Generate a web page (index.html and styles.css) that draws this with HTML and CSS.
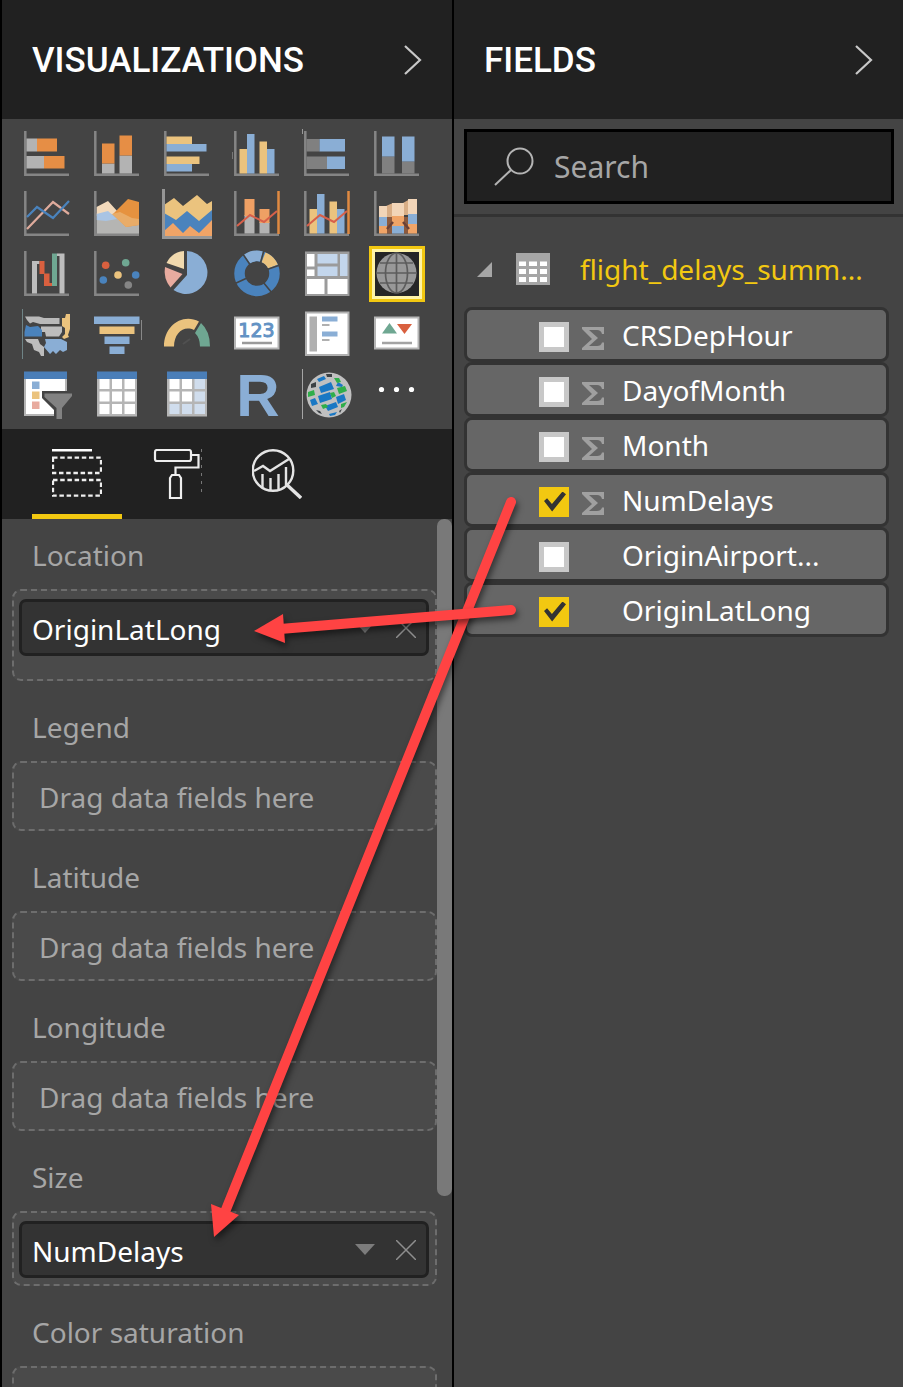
FILE: index.html
```html
<!DOCTYPE html>
<html lang="en">
<head>
<meta charset="utf-8">
<title>Report editor</title>
<link rel="stylesheet" href="styles.css">
</head>
<body>
<svg class="defs" aria-hidden="true">
  <symbol id="axes" viewBox="0 0 50 50"><path d="M3.300 2V45.700H47" fill="none" stroke="#858585" stroke-width="2.500"/></symbol>
  <symbol id="sigma" viewBox="0 0 24 24"><path fill="#a0a0a0" d="M1 1H23V8H21Q20 4 16 4H8L17 12L8 20H16Q20 20 21 16.500H23V24H1V22L11 13L1 3z"/></symbol>
  <symbol id="chevron" viewBox="0 0 18 30"><path d="M1 1L16 15L1 29" fill="none" stroke="#c8c8c8" stroke-width="2.200"/></symbol>
  <symbol id="cross" viewBox="0 0 20 20"><path d="M0 0L20 20M20 0L0 20" stroke="#8e8e8e" stroke-width="1.500"/></symbol>
  <symbol id="caret" viewBox="0 0 20 12"><path d="M0 0H20L10 11Z" fill="#7c7c7c"/></symbol>
</svg>

<main class="editor">
  <section class="panel">
    <header class="panel-head">
      <h2>VISUALIZATIONS</h2>
      <button class="collapse" aria-label="Collapse visualizations"><svg><use href="#chevron"/></svg></button>
    </header>

    <div class="gallery">
      <button aria-label="Stacked bar chart"><svg viewBox="0 0 50 50"><use href="#axes"/><path fill="#b3b3b3" d="M4.500 9.500H15V22.500H4.500zM4.500 27H22V39.500H4.500z"/><path fill="#e68e45" d="M15 9.500H35V22.500H15zM22 27H42.500V39.500H22z"/></svg></button>
      <button aria-label="Stacked column chart"><svg viewBox="0 0 50 50"><use href="#axes"/><path fill="#b3b3b3" d="M10 34.500H22.500V44.500H10zM27.500 26.500H40V44.500H27.500z"/><path fill="#e68e45" d="M10 14.500H22.500V34.500H10zM27.500 6.500H40V26.500H27.500z"/></svg></button>
      <button aria-label="Clustered bar chart"><svg viewBox="0 0 50 50"><use href="#axes"/><path fill="#ebc37e" d="M4.500 7.500H30V15H4.500zM4.500 27.500H37.500V35H4.500z"/><path fill="#8aaed5" d="M4.500 15H44.500V22.500H4.500zM4.500 35H30V42.500H4.500z"/></svg></button>
      <button aria-label="Clustered column chart"><svg viewBox="0 0 50 50"><use href="#axes"/><path fill="#ebc37e" d="M7.500 20H15V44.500H7.500zM27.500 12.500H35V44.500H27.500z"/><path fill="#8aaed5" d="M15 5H22.500V44.500H15zM35 20H42.500V44.500H35z"/><path d="M.5 23V30" stroke="#777"/></svg></button>
      <button aria-label="100% stacked bar chart"><svg viewBox="0 0 50 50"><use href="#axes"/><path fill="#808080" d="M4.500 10H17.500V22.500H4.500zM4.500 27.500H25V40H4.500z"/><path fill="#8aaed5" d="M17.500 10H43V22.500H17.500zM25 27.500H43V40H25z"/><path d="M.5 0V5" stroke="#999"/></svg></button>
      <button aria-label="100% stacked column chart"><svg viewBox="0 0 50 50"><use href="#axes"/><path fill="#808080" d="M10 27.500H22.500V44.500H10zM30 32.500H42.500V44.500H30z"/><path fill="#8aaed5" d="M10 7.500H22.500V27.500H10zM30 7.500H42.500V32.500H30z"/></svg></button>

      <button aria-label="Line chart"><svg viewBox="0 0 50 50"><use href="#axes"/><path fill="none" stroke="#dfab9c" stroke-width="2.200" d="M5 40L31 13L47 25"/><path fill="none" stroke="#4a83bd" stroke-width="2.200" d="M5 28L15 18L31 29L47 12"/></svg></button>
      <button aria-label="Area chart"><svg viewBox="0 0 50 50"><path fill="#b5b5b3" d="M4.500 24H23L36 36H47V45H4.500z"/><path fill="#f2d9bb" d="M4.500 18L16 12L26 23L30 30L20 25L4.500 27z"/><path fill="#a9c4e4" d="M4.500 25L16 22L25 30L14 32L4.500 31z"/><path fill="#e6923f" d="M21 25L36 10L47 13V36L34 38z"/><path fill="#e9ac68" d="M20 25L28 23L40 29L47 30V36L34 38z"/><use href="#axes"/></svg></button>
      <button aria-label="Stacked area chart"><svg viewBox="0 0 50 50"><path fill="#ebc37e" d="M2 16L12 9L21 17L35 6L45 15L50 12V48H2z"/><path fill="#4a83bd" d="M2 24L14 31L25 22L37 32L50 21V48H2z"/><path fill="#f0a467" d="M2 42L11 34L21 44L28 37L37 44L50 31V48H2z"/><path d="M1.500 0V48.500H50" fill="none" stroke="#969696" stroke-width="3"/></svg></button>
      <button aria-label="Line and stacked column chart"><svg viewBox="0 0 50 50"><use href="#axes"/><path fill="#b3b3b3" d="M12.500 26H22.500V44.500H12.500zM27.500 33H37.500V44.500H27.500z"/><path fill="#efa064" d="M12.500 10H22.500V27H12.500zM27.500 20H37.500V34H27.500z"/><path fill="none" stroke="#d8604a" stroke-width="2" d="M5 37L18 26L32 33L45 22"/><path d="M46.500 2V45" stroke="#e08a41" stroke-width="2.500"/></svg></button>
      <button aria-label="Line and clustered column chart"><svg viewBox="0 0 50 50"><use href="#axes"/><path fill="#ebc37e" d="M7.500 20H15V44.500H7.500zM27.500 12.500H35V44.500H27.500z"/><path fill="#8aaed5" d="M15 5H22.500V44.500H15zM35 20H42.500V44.500H35z"/><path fill="none" stroke="#d8604a" stroke-width="2" d="M5 37L18 26L32 33L45 22"/><path d="M46.500 2V45" stroke="#e08a41" stroke-width="2.500"/></svg></button>
      <button aria-label="Ribbon chart"><svg viewBox="0 0 50 50"><use href="#axes"/><path fill="#8c5a3e" d="M15 28H20V44.500H15zM32 28H37V44.500H32z"/><path fill="#d9ae86" d="M14 17L21 14V28H14zM31 14L38 10V26H31z"/><path fill="#f2d5b8" d="M7 17H15V28H7zM20 14H32V27H20zM36 10H45V25H36z"/><path fill="#8aaed5" d="M7 28H15V37H7zM20 37H32V44.500H20zM36 25H45V35H36z"/><path fill="#f0a467" d="M7 37H15V44.500H7zM20 27H32V37H20zM36 35H45V44.500H36z"/><path fill="none" stroke="#6a4138" stroke-width="2.500" d="M15 40L21 33M31 33L37 40"/></svg></button>

      <button aria-label="Waterfall chart"><svg viewBox="0 0 50 50"><use href="#axes"/><path fill="#bdbdbd" d="M10 12H17.500V15H15V44.500H10zM35 4.500H42.500V44.500H37.500V7H35z"/><path fill="#d9603f" d="M17.500 12H22.500V25H17.500zM22 24.500H27.500V34H30V37H22z"/><path fill="#6fa792" d="M30 4.500H35V37H30z"/></svg></button>
      <button aria-label="Scatter chart"><svg viewBox="0 0 50 50"><use href="#axes"/><circle cx="13.700" cy="16.300" r="3.800" fill="#d9603f"/><circle cx="33.700" cy="13.700" r="3.800" fill="#6fa792"/><circle cx="26" cy="26" r="3.800" fill="#ebc37e"/><circle cx="43.700" cy="26" r="3.800" fill="#4a83bd"/><circle cx="11.300" cy="31" r="3.800" fill="#4a83bd"/><circle cx="36.300" cy="36" r="3.800" fill="#858585"/></svg></button>
      <button aria-label="Pie chart"><svg viewBox="0 0 50 50"><path fill="#8aaed5" d="M25 2A21.500 21.500 0 1 1 11.500 41L25 26z"/><path fill="#f0d9ae" d="M22 2V20L4.500 14Q10 3 22 2z"/><path fill="#e8ab9f" d="M3 18L20.500 25L8.500 38.500Q1 29 3 18z"/></svg></button>
      <button aria-label="Donut chart"><svg viewBox="0 0 50 50"><g fill="none" stroke-width="10.500"><circle cx="25" cy="24.500" r="17.500" stroke="#4a83bd"/><path stroke="#8aaed5" d="M15 10A17.500 17.500 0 0 1 29.500 7.500"/><path stroke="#ebc37e" d="M31.500 8.300A17.500 17.500 0 0 1 41 17.500"/></g><path stroke="#444" stroke-width="1.600" d="M10.500 4.500L19 17M32 1L28.500 14M48 16L35 20.500M40 44L31 33M2 35L14 29.500"/></svg></button>
      <button aria-label="Treemap"><svg viewBox="0 0 50 50"><path fill="#9b9b9b" d="M3 2.500H47.500V47H3z"/><path fill="#fff" d="M5 5H12.500V17.500H5zM5 20.500H12.500V27H5zM5 30H22.500V45H5zM25.500 30H45.500V45H25.500z"/><path fill="#c3d6ec" d="M15.500 5H35.500V14.500H15.500zM15.500 17.500H35.500V27H15.500zM38 5H45.500V27H38z"/></svg></button>
      <button class="chosen" aria-label="Map" aria-pressed="true"><svg viewBox="0 0 50 50"><circle cx="24.500" cy="24" r="20" fill="#989898"/><g fill="none" stroke="#5c5c5c" stroke-width="1.700"><ellipse cx="24.500" cy="24" rx="11" ry="20"/><path d="M24.500 4V44M4 24H45M8 14H41M8 34H41"/></g></svg></button>

      <button aria-label="Filled map"><svg viewBox="0 0 50 50"><path d="M.5 0V50" stroke="#6f8486"/><path fill="#b9b9b9" d="M3 7.500H17L22 9H37.500V15H18L11 13L8 14.500L5 11z"/><path fill="#bdbdbd" d="M19 17.500H40V23L37 27.500H24L23 23H19z"/><path fill="#bdbdbd" d="M3 30H16L18 35L22 38V47H19L17 43L12 41L10 35L5 33z"/><path fill="#4a83bd" d="M4 16L8 18L16 17L20 21V27.500H2.500V23z"/><path fill="#8aaed5" d="M23 30H39L45 33V41L41 43L38 41L34 45L31 42L28 45L22 38L24 34z"/><path fill="#ebc37e" d="M44 5H48V20L46 26L47 28L42 30L40 28L43 25V19L40 17V9H43z"/></svg></button>
      <button aria-label="Funnel"><svg viewBox="0 0 50 50"><path fill="#8aaed5" d="M2 7.500H47.500V15H2zM12.500 27.500H37.500V35H12.500zM17.500 37.500H32.500V45H17.500z"/><path fill="#ebc37e" d="M7.500 17.500H42.500V25H7.500z"/><path d="M49.500 11V31" stroke="#888"/></svg></button>
      <button aria-label="Gauge"><svg viewBox="0 0 50 50"><path fill="#ebc37e" d="M2 37.500C2 17 20 4 37 12.500L32 21C22 16 12 24 12 37.500z"/><path fill="#6fa792" d="M39 14Q48 22 48 37.500H38Q38 29 33 24z"/><path d="M21 35L28 30" stroke="#505050" stroke-width="2"/></svg></button>
      <button aria-label="Card"><svg viewBox="0 0 50 50"><path fill="#fff" stroke="#b5b5b5" stroke-width="2" d="M3 8.500H46.500V39.500H3z"/><text class="card-digits" x="24.500" y="28" text-anchor="middle">123</text><path d="M10 34H40" stroke="#9a9a9a" stroke-width="2.500"/></svg></button>
      <button aria-label="Multi-row card"><svg viewBox="0 0 50 50"><path fill="#fff" stroke="#b0b0b0" stroke-width="2" d="M4 3.500H46.500V46H4z"/><path fill="#b0b0b0" d="M7.500 7.500H15V42.500H7.500zM20 15H27.500V17H20zM20 30H27.500V32H20z"/><path fill="#8aaed5" d="M20 7.500H35.500V12.500H20zM20 22.500H35.500V27.500H20z"/></svg></button>
      <button aria-label="KPI"><svg viewBox="0 0 50 50"><path fill="#fff" stroke="#b5b5b5" stroke-width="2" d="M3 8.500H46.500V39.500H3z"/><path fill="#6fa792" d="M10 24.500L17.500 14L25 24.500z"/><path fill="#d9603f" d="M25 15H40L32.500 25z"/><path d="M10 34H40" stroke="#a3a3a3" stroke-width="2.500"/></svg></button>

      <button aria-label="Slicer"><svg viewBox="0 0 50 50"><path fill="#fff" stroke="#b5b5b5" stroke-width="2" d="M3 8H44V46H3z"/><path fill="#4a7eb8" d="M2 2.500H45V10H2z"/><path fill="#8aaed5" d="M10 12.500H17.500V20H10z"/><path fill="#ebc37e" d="M10 22.500H17.500V30H10z"/><path fill="#e8ab9f" d="M10 32.500H17.500V40H10z"/><path fill="#444" d="M20 22H50V50H32V41L20 29z"/><path fill="#828282" d="M22.500 24.500H50V27L40 39V50H34.500V39L22.500 28z"/></svg></button>
      <button aria-label="Table"><svg viewBox="0 0 50 50"><path fill="#b5b5b5" d="M5 8H45V47.500H5z"/><path fill="#4a7eb8" d="M5 2.500H45V10H5z"/><path fill="#fff" d="M7.500 10H17.500V20H7.500zM20 10H30V20H20zM32.500 10H43V20H32.500zM7.500 22.500H17.500V32.500H7.500zM20 22.500H30V32.500H20zM32.500 22.500H43V32.500H32.500zM7.500 35H17.500V45H7.500zM20 35H30V45H20zM32.500 35H43V45H32.500z"/></svg></button>
      <button aria-label="Matrix"><svg viewBox="0 0 50 50"><path fill="#b5b5b5" d="M5 8H45V47.500H5z"/><path fill="#4a7eb8" d="M5 2.500H45V10H5z"/><path fill="#fff" d="M7.500 10H17.500V20H7.500zM20 10H30V20H20zM7.500 22.500H17.500V32.500H7.500zM20 22.500H30V32.500H20z"/><path fill="#d0dded" d="M32.500 10H43V20H32.500zM32.500 22.500H43V32.500H32.500zM7.500 35H17.500V45H7.500zM20 35H30V45H20zM32.500 35H43V45H32.500z"/></svg></button>
      <button aria-label="R script visual"><svg viewBox="0 0 50 50"><text class="r-mark" x="26" y="47" text-anchor="middle">R</text></svg></button>
      <button aria-label="ArcGIS map"><svg viewBox="0 0 50 50"><path d="M.5 0V50" stroke="#a5a5a5"/><circle cx="27" cy="26" r="22.500" fill="#c0c0c0"/><g fill="#1a78c4"><path d="M15 10L22 7L24 10L17 13zM17 18L29 13L32 20L19 24zM16 27L28 23L30 30L18 34zM23 37L34 33L36 38L26 42zM8 31L13 29L16 35L10 37zM36 13L41 16L40 18L34 17zM34 28L42 25L44 31L36 35zM27 45L35 43L33 46L28 47z"/></g><g fill="#2fae4a"><path d="M32 9L37 9L39 13L35 14zM6 23L12 21L13 26L6 28zM35 19L43 17L45 22L37 25zM19 36L24 35L26 38L21 40zM39 35L45 33L42 38L39 39zM28 24L32 23L34 27L30 29z"/></g><path fill="#3c4145" d="M24 5L30 5L30 8L25 8zM9 15L14 13L14 18L9 19zM14 41L18 42L20 45L17 44zM37 42L40 40L38 44z"/></svg></button>
      <button aria-label="More visuals"><svg viewBox="0 0 50 50"><g fill="#fff"><circle cx="9.500" cy="20.500" r="2.600"/><circle cx="24.500" cy="20.500" r="2.600"/><circle cx="39.500" cy="20.500" r="2.600"/></g></svg></button>
    </div>

    <div class="tabs" role="tablist">
      <button role="tab" aria-selected="true" aria-label="Fields"><svg viewBox="0 0 50 50"><path d="M0 1.300H40" stroke="#fff" stroke-width="2.600"/><path d="M1 8.700H49V24H1zM1 31H49V46.700H1z" fill="none" stroke="#eee" stroke-width="2.300" stroke-dasharray="4.500 2.700"/></svg></button>
      <button role="tab" aria-selected="false" aria-label="Format"><svg viewBox="0 0 50 50"><g fill="none" stroke="#eee" stroke-width="2.200"><rect x="3" y="1" width="36" height="11" rx="2"/><path d="M39 6H46.500V18.500H23.500V26"/><path d="M20 26H27L29 29V49H18V29z"/></g><path d="M49.500 0V48" stroke="#777" stroke-dasharray="3 5"/></svg></button>
      <button role="tab" aria-selected="false" aria-label="Analytics"><svg viewBox="0 0 50 50"><g fill="none" stroke="#e4e4e4" stroke-width="2.400"><circle cx="21" cy="21.500" r="20.300"/><path d="M2 22L11 17L18 22L37 10M10.500 25V38M18.500 29V41M26.500 25V40M34 18V36"/><path d="M34 35L49 49" stroke-width="3.400"/></g></svg></button>
    </div>

    <div class="wells">
      <h3>Location</h3>
      <div class="well roomy">
        <div class="chip"><span>OriginLatLong</span><button aria-label="OriginLatLong options"><svg class="caret"><use href="#caret"/></svg></button><button aria-label="Remove OriginLatLong"><svg class="cross"><use href="#cross"/></svg></button></div>
      </div>
      <h3>Legend</h3>
      <div class="well"><p>Drag data fields here</p></div>
      <h3>Latitude</h3>
      <div class="well"><p>Drag data fields here</p></div>
      <h3>Longitude</h3>
      <div class="well"><p>Drag data fields here</p></div>
      <h3>Size</h3>
      <div class="well">
        <div class="chip"><span>NumDelays</span><button aria-label="NumDelays options"><svg class="caret"><use href="#caret"/></svg></button><button aria-label="Remove NumDelays"><svg class="cross"><use href="#cross"/></svg></button></div>
      </div>
      <h3>Color saturation</h3>
      <div class="well"><p></p></div>
      <div class="thumb"></div>
    </div>
  </section>

  <section class="panel">
    <header class="panel-head">
      <h2>FIELDS</h2>
      <button class="collapse" aria-label="Collapse fields"><svg><use href="#chevron"/></svg></button>
    </header>
    <div class="search-area">
      <label class="search">
        <svg viewBox="0 0 40 40"><g fill="none" stroke="#b4b4b4" stroke-width="2"><circle cx="26" cy="14" r="12.500"/><path d="M17 23L1 38"/></g></svg>
        <input type="search" placeholder="Search" aria-label="Search">
      </label>
    </div>
    <div class="field-tree">
      <button class="table-row" aria-expanded="true">
        <svg class="expander" viewBox="0 0 15 15"><path d="M15 0V15H0z" fill="#a6a6a6"/></svg>
        <svg class="table-icon" viewBox="0 0 34 32"><path fill="#a6a6a6" d="M0 0H34V32H0z"/><path fill="#fff" d="M3 8.500H10V13H3zM13 8.500H21V13H13zM24 8.500H31V13H24zM3 16H10V21H3zM13 16H21V21H13zM24 16H31V21H24zM3 24H10V29H3zM13 24H21V29H13zM24 24H31V29H24z"/></svg>
        <span>flight_delays_summ...</span>
      </button>
      <label class="field"><input type="checkbox"><svg><use href="#sigma"/></svg><span>CRSDepHour</span></label>
      <label class="field"><input type="checkbox"><svg><use href="#sigma"/></svg><span>DayofMonth</span></label>
      <label class="field"><input type="checkbox"><svg><use href="#sigma"/></svg><span>Month</span></label>
      <label class="field"><input type="checkbox" checked><svg><use href="#sigma"/></svg><span>NumDelays</span></label>
      <label class="field"><input type="checkbox"><svg></svg><span>OriginAirport...</span></label>
      <label class="field"><input type="checkbox" checked><svg></svg><span>OriginLatLong</span></label>
    </div>
  </section>

  <svg class="arrows" viewBox="0 0 903 1387" aria-hidden="true">
    <g class="arrow"><path d="M511 502L225 1212"/><polygon points="211,1204 239,1215 214,1237"/></g>
    <g class="arrow"><path d="M511 610L280 629"/><polygon points="254,631 283,614 285,643"/></g>
  </svg>
</main>
</body>
</html>
```
FILE: styles.css
```css
* { box-sizing: border-box; }

body {
  margin: 0;
  background: #444;
  color: #fff;
  font: 28px/40px "Noto Sans", "Open Sans", sans-serif;
}

h2, h3, p { margin: 0; font-weight: 400; }

button {
  display: block;
  padding: 0;
  border: 0;
  background: none;
  color: inherit;
  font: inherit;
}

svg { display: block; flex: none; }

.defs { position: absolute; width: 0; height: 0; }

.editor {
  position: relative;
  display: grid;
  grid-template-columns: 452fr 451fr;
  height: 100vh;
  overflow: hidden;
}

.panel {
  display: flex;
  flex-direction: column;
  min-width: 0;
  min-height: 0;
  border-left: 2px solid #000;
}

.panel-head {
  display: flex;
  flex: none;
  align-items: center;
  justify-content: space-between;
  height: 119px;
  padding: 0 30px;
  background: #212121;
}

.panel-head h2 {
  padding-top: 2px;
  font: 500 35px/40px Roboto, sans-serif;
}

.collapse svg { width: 18px; height: 30px; }

.gallery {
  display: grid;
  flex: none;
  grid-template-columns: repeat(6, 50px);
  gap: 10px 20px;
  padding: 10px 20px;
}

.gallery svg { width: 50px; height: 50px; overflow: visible; }

.chosen {
  background: #262626;
  box-shadow: 0 0 0 3px #f2c811, inset 0 0 0 3px #fff4a8;
}

.card-digits {
  fill: #6292c4;
  stroke: #6292c4;
  stroke-width: 1px;
  font: 19px "DejaVu Sans", sans-serif;
}

.r-mark { fill: #8aaed5; font: 700 60px/50px "Liberation Sans", sans-serif; }

.tabs {
  display: flex;
  flex: none;
  gap: 10px;
  height: 90px;
  padding: 0 30px;
  background: #212121;
}

.tabs button {
  width: 90px;
  padding: 20px 20px 15px;
  border-bottom: 5px solid transparent;
}

.tabs button[aria-selected="true"] { border-color: #f2c811; }
.tabs svg { width: 50px; height: 50px; }

.wells {
  position: relative;
  flex: 1;
  min-height: 0;
  overflow: hidden;
  padding: 0 15px 0 10px;
}

.wells h3 {
  padding: 26px 20px 14px;
  color: #a6a6a6;
  font-size: 28px;
  line-height: 40px;
}

.wells h3:first-child { padding-top: 16px; }

.well {
  padding: 8px 6px 6px 5px;
  border: 2px dashed #6d6d6d;
  border-radius: 9px;
  background: #4a4a4a;
}

.well.roomy { padding-bottom: 23px; }

.well p {
  height: 52px;
  padding: 6px 20px;
  color: #a6a6a6;
}

.chip {
  display: flex;
  align-items: center;
  gap: 21px;
  height: 57px;
  padding: 0 10px;
  border: 3px solid #212121;
  border-radius: 7px;
  background: #333;
}

.chip span { flex: 1; padding-top: 2px; }
.caret { width: 20px; height: 12px; }
.cross { width: 20px; height: 20px; }

.thumb {
  position: absolute;
  top: 0;
  right: 0;
  width: 15px;
  height: 78%;
  border-radius: 7px;
  background: #797979;
}

.search-area {
  padding: 10px 9px 10px 10px;
  border-bottom: 3px solid #333;
}

.search {
  display: flex;
  align-items: center;
  gap: 20px;
  height: 75px;
  padding: 0 27px;
  border: 3px solid #000;
  background: #212121;
}

.search svg { width: 40px; height: 40px; }

.search input {
  flex: 1;
  min-width: 0;
  padding: 0;
  border: 0;
  outline: 0;
  background: none;
  color: #a6a6a6;
  font: inherit;
  font-size: 30px;
}

.search input::placeholder { color: #a6a6a6; opacity: 1; }

.field-tree { padding: 17px 14px 0 10px; }

.table-row {
  display: flex;
  align-items: center;
  height: 70px;
  margin-bottom: 3px;
  padding: 0 13px;
  color: #f2c811;
}

.expander { width: 15px; height: 15px; margin-right: 24px; }
.table-icon { width: 34px; height: 32px; margin-right: 30px; }

.field {
  display: flex;
  align-items: center;
  height: 55px;
  padding-left: 72px;
  border: 3px solid #333;
  border-radius: 8px;
  background: #666;
}

.field svg { width: 24px; height: 24px; margin: 7px 17px 0 12px; }

.field input {
  appearance: none;
  flex: none;
  width: 30px;
  height: 30px;
  margin: 4px 0 0;
  border: 5px solid #c8c8c8;
  background: #fff;
}

.field input:checked {
  display: grid;
  place-items: center;
  border-color: #f2c811;
  background: #f2c811;
}

.field input:checked::before {
  content: "";
  width: 22px;
  height: 20px;
  background: #333;
  clip-path: polygon(0 48%, 14% 34%, 36% 62%, 84% 0, 100% 14%, 37% 100%);
}

.arrows {
  position: absolute;
  top: 0;
  left: 0;
  width: 903px;
  height: 1387px;
  pointer-events: none;
}

.arrow { filter: drop-shadow(2px 4px 3px rgba(0, 0, 0, 0.5)); }
.arrow path { fill: none; stroke: #ff4343; stroke-width: 10; stroke-linecap: round; }
.arrow polygon { fill: #ff4343; }
```
